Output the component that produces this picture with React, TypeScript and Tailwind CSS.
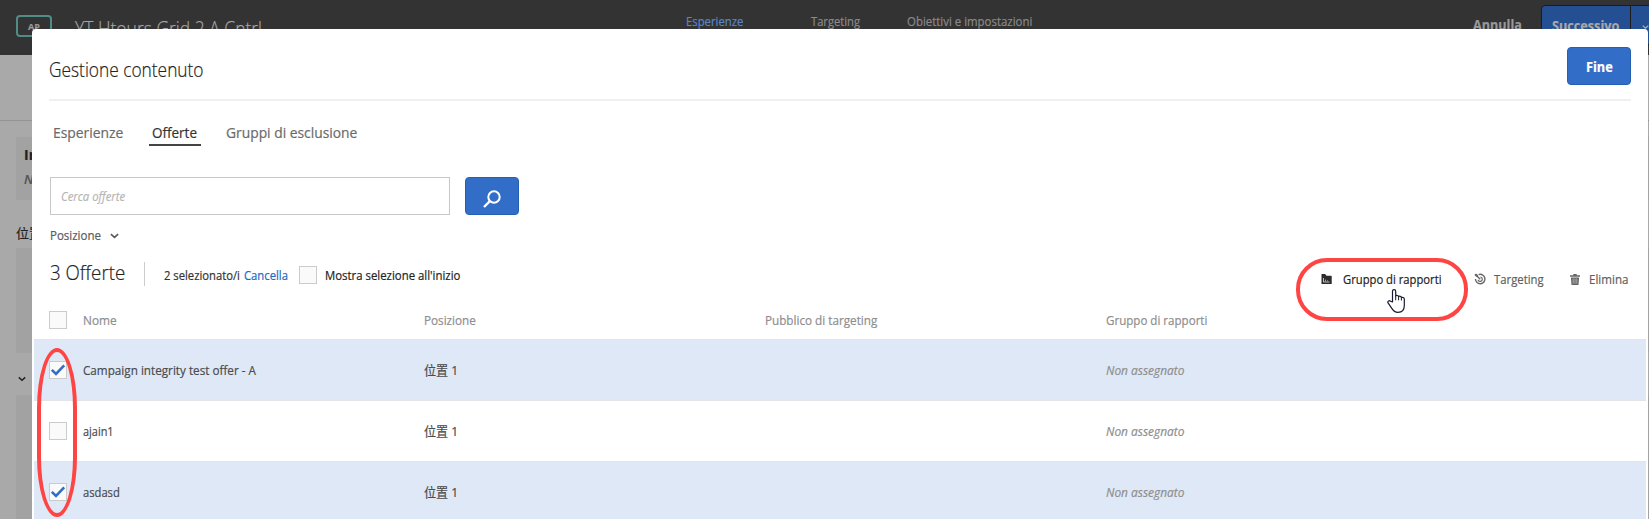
import React from "react";

function Text({ children, className }: { children: React.ReactNode; className: string }) {
  return <span className={`block w-max origin-left whitespace-nowrap ${className}`}>{children}</span>;
}

function Chevron({ className }: { className: string }) {
  return (
    <svg viewBox="0 0 10 6" className={className} fill="none" stroke="currentColor" strokeWidth="1.8">
      <path d="M1 1l4 3.6L9 1" />
    </svg>
  );
}

function Checkbox({ checked = false }: { checked?: boolean }) {
  return (
    <span className="flex h-[18px] w-[18px] shrink-0 items-center justify-center border border-[#cbcbcb] bg-[#fafafa]">
      {checked && (
        <svg viewBox="0 0 16 16" className="h-4 w-4 shrink-0" fill="none" stroke="#326ec8" strokeWidth="2.6">
          <path d="M1.8 7.8L6 12L14.2 3.4" />
        </svg>
      )}
    </span>
  );
}

function FolderIcon() {
  return (
    <svg viewBox="0 0 11 10" className="h-[10px] w-[11px] shrink-0">
      <path d="M.5 0h3.6l1.4 1.8h4.6q.6 0 .6.6V10H.5z" fill="#2c2c2c" />
      <path d="M2.5 4v4h6" stroke="#fff" strokeWidth=".7" fill="none" />
      <path d="M4.5 5.6v1.6M6.5 6.4v.8" stroke="#fff" strokeWidth=".6" />
    </svg>
  );
}

function TargetIcon() {
  return (
    <svg viewBox="0 0 12 12" className="h-3 w-3 shrink-0" fill="none" stroke="#666">
      <path d="M4.6 1.6A4.7 4.7 0 1 1 1.5 6" strokeWidth="1.4" />
      <path d="M6.4 4A2.2 2.2 0 1 1 4 6.8" strokeWidth="1.2" />
      <path d="M2 2l4.2 4.2" strokeWidth="1.4" />
      <path d="M.4 1.8L2 .4l1.9 1.7.2 2-2-.3z" fill="#666" stroke="none" />
    </svg>
  );
}

function TrashIcon() {
  return (
    <svg viewBox="0 0 10 11" className="h-[11px] w-[10px] shrink-0" fill="#666">
      <path d="M3.3 0h3.4v1.2H10v1.5H0V1.2h3.3z" />
      <path d="M.9 3.4h8.2L8.5 11h-7z" />
      <path d="M3.2 4.6v5M5 4.6v5M6.8 4.6v5" stroke="#d8d8d8" strokeWidth=".6" />
    </svg>
  );
}

const rows = [
  { name: "Campaign integrity test offer - A", fit: "scale-x-[0.9]", checked: true },
  { name: "ajain1", fit: "scale-x-[0.84]", checked: false },
  { name: "asdasd", fit: "scale-x-[0.86]", checked: true },
];

function Backdrop() {
  return (
    <div className="flex h-full flex-col bg-[#a9a9a9]">
      <header className="flex h-[55px] shrink-0 bg-[#333333] text-[#909090]">
        <div className="w-[75px] pl-4 pt-[15px]">
          <div className="flex h-[22px] w-9 items-center justify-center rounded-[4px] border-2 border-[#4f8d86] pt-px text-[9px] font-bold text-[#999999]">AP</div>
        </div>
        <div className="w-[611px] pt-[15px]">
          <Text className="scale-x-[0.874] text-[20px] font-light leading-7 text-[#a5a5a5]">YT Htours Grid 2 A Cntrl</Text>
        </div>
        <nav className="flex w-[787px] pt-3 text-[13px] leading-[18px] text-[#8a8a8a]">
          <div className="w-[125px]"><Text className="scale-x-[0.87] text-[#5886c8]">Esperienze</Text></div>
          <div className="w-24"><Text className="scale-x-[0.86]">Targeting</Text></div>
          <Text className="scale-x-[0.879]">Obiettivi e impostazioni</Text>
        </nav>
        <div className="w-[68px] pt-[15px]">
          <Text className="scale-x-[0.902] text-[14px] font-bold leading-5 text-[#999999]">Annulla</Text>
        </div>
        <div className="mt-[5px] h-10 w-[90px] rounded-l border border-[#1c1c1c] bg-[#244f92] pl-[10px] pt-[10px]">
          <Text className="scale-x-[0.905] text-[14px] font-bold leading-5 text-[#a9a9a9]">Successivo</Text>
        </div>
        <div className="mt-[5px] flex h-10 grow justify-end border-y border-[#1c1c1c] bg-[#244f92] pt-[18px]">
          <Chevron className="h-[6px] w-[7px] text-[#b0b0b0]" />
        </div>
      </header>
      <div className="h-[66px] shrink-0 border-b border-[#939393]" />
      <div className="flex grow flex-col pl-4 pt-4">
        <div className="h-[63px] bg-[#a2a2a2] pl-2 pt-2 text-[#222222]">
          <div className="text-[14px] font-bold leading-5">Interazione</div>
          <div className="pt-1 text-[13px] font-semibold italic leading-5 text-[#555555]">Nessuna</div>
        </div>
        <div className="h-12 pt-[23px] text-[13px] leading-5 text-[#222222]">位置 1</div>
        <div className="h-[105px] bg-[#a2a2a2]" />
        <div className="flex h-[42px] items-center pl-[2px] pt-[10px] text-[#222222]">
          <Chevron className="h-[6px] w-2" />
        </div>
        <div className="grow bg-[#a2a2a2]" />
      </div>
    </div>
  );
}

export default function App() {
  return (
    <div className="relative h-[519px] w-[1649px] overflow-hidden font-['Open_Sans','Noto_Sans_CJK_SC',sans-serif] text-[13px] leading-5 text-[#4b4b4b] [-webkit-text-stroke-width:0.2px]">
      <Backdrop />
      <main className="absolute left-8 top-[29px] flex h-[490px] w-[1616px] flex-col overflow-hidden rounded-t-[4px] bg-white">
        <div className="mx-[17px] flex h-[72px] shrink-0 justify-between border-b-2 border-[#f0f0f0]">
          <Text className="scale-x-[0.866] pt-[27px] text-[20px] font-light leading-7 text-[#222222]">Gestione contenuto</Text>
          <button className="mt-[18px] flex h-[38px] w-16 items-center rounded-[4px] border border-[#2460b4] bg-[#326ec8] pl-[18px] pt-px text-[14px] font-bold text-white">
            <Text className="scale-x-[0.908]">Fine</Text>
          </button>
        </div>
        <nav className="flex h-[76px] shrink-0 pl-[21px] pt-5 text-[15px] leading-[22px] text-[#6a6a6a]">
          <div className="w-24"><Text className="scale-x-[0.925]">Esperienze</Text></div>
          <div className="h-[25px] w-[52px] border-b-2 border-[#444444] pl-[3px] text-[#323232]">
            <Text className="scale-x-[0.898]">Offerte</Text>
          </div>
          <div className="pl-[25px]"><Text className="scale-x-[0.922]">Gruppi di esclusione</Text></div>
        </nav>
        <div className="flex shrink-0 gap-[15px] pl-[18px]">
          <div className="flex h-[38px] w-[400px] items-center border border-[#c8c8c8] pl-[10px] italic text-[#b5b5b5]">
            <Text className="scale-x-[0.87]">Cerca offerte</Text>
          </div>
          <button className="flex h-[38px] w-[54px] items-center justify-center rounded-[4px] border border-[#2460b4] bg-[#326ec8]">
            <svg viewBox="0 0 18 18" className="mt-[5px] h-[18px] w-[18px]" fill="none" stroke="#fff" strokeWidth="2">
              <circle cx="11" cy="7" r="5.7" />
              <path d="M7 11L1 17" strokeWidth="2.4" />
            </svg>
          </button>
        </div>
        <div className="flex h-[43px] shrink-0 pl-[18px] pt-[10px] text-[#5a5a5a]">
          <div className="w-[60px]"><Text className="scale-x-[0.885]">Posizione</Text></div>
          <Chevron className="mt-[8px] h-[6px] w-[9px]" />
        </div>
        <div className="flex h-[44px] shrink-0 pl-[18px]">
          <div className="-mt-px w-[94px]"><Text className="scale-x-[0.892] text-[21px] font-light leading-[30px] text-[#222222]">3 Offerte</Text></div>
          <div className="mt-1 h-6 w-px bg-[#cccccc]" />
          <div className="ml-[19px] w-[80px] pt-[7px]"><Text className="scale-x-[0.865] text-[#323232]">2 selezionato/i</Text></div>
          <div className="w-[55px] pt-[7px]"><Text className="scale-x-[0.867] text-[#2267c5]">Cancella</Text></div>
          <div className="pt-[8px]"><Checkbox /></div>
          <div className="w-[1004px] pl-[8px] pt-[7px]"><Text className="scale-x-[0.876] text-[#222222]">Mostra selezione all'inizio</Text></div>
          <div className="flex pt-[11px]">
            <div className="flex h-5 w-[153px] items-center text-[#222222]">
              <FolderIcon /><Text className="ml-[11px] scale-x-[0.865]">Gruppo di rapporti</Text>
            </div>
            <div className="flex h-5 w-24 items-center text-[#5f5f5f]">
              <TargetIcon /><Text className="ml-[8px] scale-x-[0.87]">Targeting</Text>
            </div>
            <div className="flex h-5 items-center text-[#5f5f5f]">
              <TrashIcon /><Text className="ml-[9px] scale-x-[0.89]">Elimina</Text>
            </div>
          </div>
        </div>
        <div className="ml-[2px] grid h-[35px] w-[1612px] shrink-0 grid-cols-[34px_341px_341px_341px_1fr] items-center pl-[15px] text-[#8e8e8e]">
          <Checkbox />
          <Text className="scale-x-[0.91]">Nome</Text>
          <Text className="scale-x-[0.9]">Posizione</Text>
          <Text className="scale-x-[0.9]">Pubblico di targeting</Text>
          <Text className="scale-x-[0.89]">Gruppo di rapporti</Text>
        </div>
        <div className="ml-[2px] mt-[2px] w-[1612px] shrink-0">
          {rows.map((r) => (
            <div
              key={r.name}
              className={`grid h-[61px] grid-cols-[34px_341px_341px_341px_1fr] items-center border-t border-[#e2e4e8] pl-[15px] ${r.checked ? "bg-[#dfe8f6]" : "bg-white"}`}
            >
              <Checkbox checked={r.checked} />
              <Text className={r.fit}>{r.name}</Text>
              <Text className="scale-x-[0.93]">位置 1</Text>
              <span />
              <Text className="scale-x-[0.916] italic text-[#8e8e8e]">Non assegnato</Text>
            </div>
          ))}
        </div>
      </main>
      <div className="absolute left-[37px] top-[348px] h-[169px] w-10 rounded-[20px/60px] border-4 border-[#ff4444]" />
      <div className="absolute left-[1296px] top-[258px] h-[63px] w-[172px] rounded-[31px] border-4 border-[#ff4444]" />
      <svg viewBox="0 0 18 24" className="absolute left-[1387px] top-[289px] h-6 w-[18px]" fill="#fff" stroke="#1a1a2e" strokeWidth="1.2" strokeLinejoin="round">
        <path d="M5.500 13V2.300c0-2.200 3.200-2.200 3.200 0V7c.6-.9 2.700-.7 2.900.6.8-.7 2.600-.4 2.800.9 1-.5 2.900-.1 2.900 1.500v6.500c0 4-2.300 6.800-6.300 6.800-3.500 0-4.800-1.500-6.200-3.900L.9 13.600c-.6-1.500 1.500-2.500 2.600-1.300z" />
        <path d="M8.700 6.500v4.800M11.600 7.600v3.700M14.400 8.500v3" strokeWidth="1" />
      </svg>
    </div>
  );
}
